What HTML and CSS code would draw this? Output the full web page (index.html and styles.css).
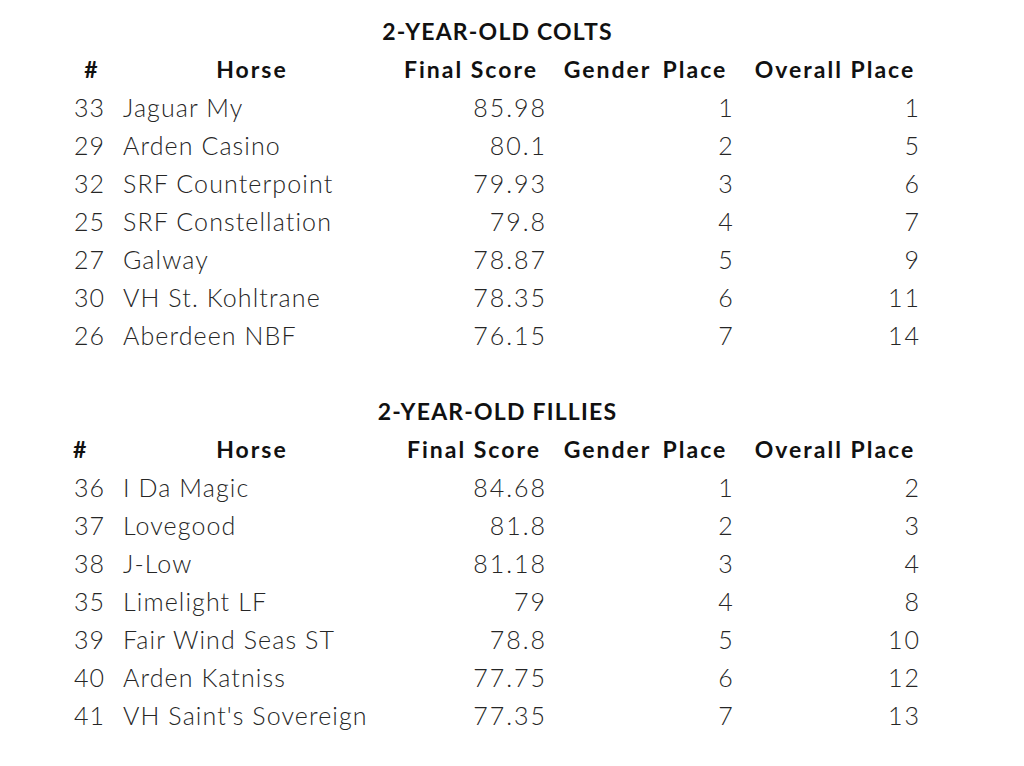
FILE: index.html
```html
<!DOCTYPE html>
<html>
<head>
<meta charset="utf-8">
<link rel="stylesheet" href="styles.css">
</head>
<body>
<div class="sheet">
  <div class="title">2-YEAR-OLD COLTS</div>
  <div class="row head">
    <div class="c-num c-center">#</div>
    <div class="c-horse c-center">Horse</div>
    <div class="c-score c-center">Final Score</div>
    <div class="c-gender c-center">Gender Place</div>
    <div class="c-overall c-center">Overall Place</div>
  </div>
  <div class="row"><div class="c-num">33</div><div class="c-horse">Jaguar My</div><div class="c-score">85.98</div><div class="c-gender">1</div><div class="c-overall">1</div></div>
  <div class="row"><div class="c-num">29</div><div class="c-horse">Arden Casino</div><div class="c-score">80.1</div><div class="c-gender">2</div><div class="c-overall">5</div></div>
  <div class="row"><div class="c-num">32</div><div class="c-horse">SRF Counterpoint</div><div class="c-score">79.93</div><div class="c-gender">3</div><div class="c-overall">6</div></div>
  <div class="row"><div class="c-num">25</div><div class="c-horse">SRF Constellation</div><div class="c-score">79.8</div><div class="c-gender">4</div><div class="c-overall">7</div></div>
  <div class="row"><div class="c-num">27</div><div class="c-horse">Galway</div><div class="c-score">78.87</div><div class="c-gender">5</div><div class="c-overall">9</div></div>
  <div class="row"><div class="c-num">30</div><div class="c-horse">VH St. Kohltrane</div><div class="c-score">78.35</div><div class="c-gender">6</div><div class="c-overall">11</div></div>
  <div class="row"><div class="c-num">26</div><div class="c-horse">Aberdeen NBF</div><div class="c-score">76.15</div><div class="c-gender">7</div><div class="c-overall">14</div></div>
  <div class="row blank"></div>
  <div class="title">2-YEAR-OLD FILLIES</div>
  <div class="row head">
    <div class="c-num c-left">#</div>
    <div class="c-horse c-center">Horse</div>
    <div class="c-score c-center shift">Final Score</div>
    <div class="c-gender c-center">Gender Place</div>
    <div class="c-overall c-center">Overall Place</div>
  </div>
  <div class="row"><div class="c-num">36</div><div class="c-horse">I Da Magic</div><div class="c-score">84.68</div><div class="c-gender">1</div><div class="c-overall">2</div></div>
  <div class="row"><div class="c-num">37</div><div class="c-horse">Lovegood</div><div class="c-score">81.8</div><div class="c-gender">2</div><div class="c-overall">3</div></div>
  <div class="row"><div class="c-num">38</div><div class="c-horse">J-Low</div><div class="c-score">81.18</div><div class="c-gender">3</div><div class="c-overall">4</div></div>
  <div class="row"><div class="c-num">35</div><div class="c-horse">Limelight LF</div><div class="c-score">79</div><div class="c-gender">4</div><div class="c-overall">8</div></div>
  <div class="row"><div class="c-num">39</div><div class="c-horse">Fair Wind Seas ST</div><div class="c-score">78.8</div><div class="c-gender">5</div><div class="c-overall">10</div></div>
  <div class="row"><div class="c-num">40</div><div class="c-horse">Arden Katniss</div><div class="c-score">77.75</div><div class="c-gender">6</div><div class="c-overall">12</div></div>
  <div class="row"><div class="c-num">41</div><div class="c-horse">VH Saint's Sovereign</div><div class="c-score">77.35</div><div class="c-gender">7</div><div class="c-overall">13</div></div>
</div>
</body>
</html>
```
FILE: styles.css
```css
html, body {
  margin: 0;
  padding: 0;
  background: #ffffff;
}
body {
  font-family: Lato, "Open Sans", "Liberation Sans", sans-serif;
  color: #262626;
}
.sheet {
  width: 855px;
  margin-left: 70px;
  padding-top: 12px;
}
.title {
  height: 38px;
  line-height: 38px;
  text-align: center;
  font-weight: 700;
  font-size: 23px;
  letter-spacing: 1.2px;
  color: #111;
}
.row {
  display: grid;
  grid-template-columns: 42px 278px 160px 187px 188px;
  height: 38px;
  line-height: 38px;
  font-size: 25px;
  font-weight: 300;
  letter-spacing: 1.2px;
  white-space: nowrap;
}
.row.head {
  font-weight: 700;
  font-size: 23px;
  letter-spacing: 2px;
  color: #111;
}
.c-num {
  text-align: right;
  padding-right: 7px;
  letter-spacing: 1px;
}
.c-horse {
  text-align: left;
  padding-left: 11px;
  letter-spacing: 1.1px;
}
.c-score {
  text-align: right;
  padding-right: 3px;
  letter-spacing: 2px;
}
.c-gender {
  text-align: right;
  padding-right: 3px;
}
.c-overall {
  text-align: right;
  padding-right: 4px;
  letter-spacing: 2px;
}
.row .c-center {
  text-align: center;
  padding: 0 0 0 2px;
  letter-spacing: 2px;
}
.row .c-gender.c-center {
  word-spacing: 4px;
  padding-left: 4px;
}
.row .c-overall.c-center {
  padding-left: 8px;
}
.row .c-left {
  text-align: left;
  padding: 0 0 0 3px;
}
.row .shift {
  padding-left: 8px;
}
```
